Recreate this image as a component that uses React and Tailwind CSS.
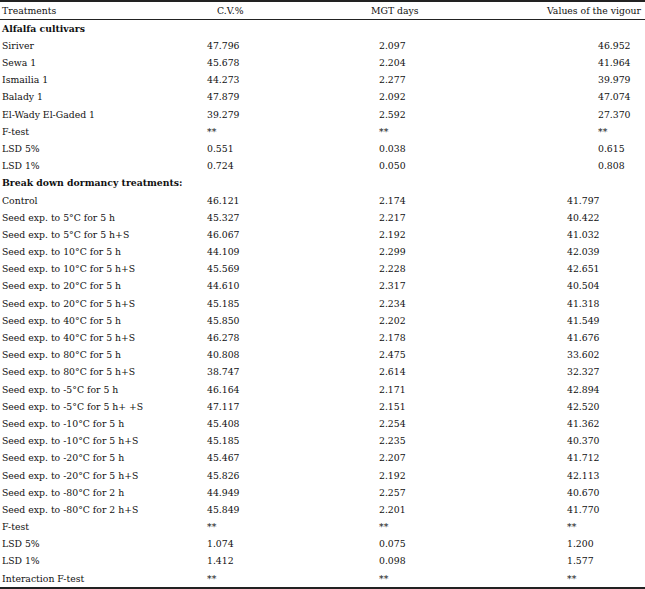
import React from 'react';

const cultivars = [
  ['Siriver', '47.796', '2.097', '46.952'],
  ['Sewa 1', '45.678', '2.204', '41.964'],
  ['Ismailia 1', '44.273', '2.277', '39.979'],
  ['Balady 1', '47.879', '2.092', '47.074'],
  ['El-Wady El-Gaded 1', '39.279', '2.592', '27.370'],
  ['F-test', '**', '**', '**'],
  ['LSD 5%', '0.551', '0.038', '0.615'],
  ['LSD 1%', '0.724', '0.050', '0.808'],
];

const dormancy = [
  ['Control', '46.121', '2.174', '41.797'],
  ['Seed exp. to 5°C for 5 h', '45.327', '2.217', '40.422'],
  ['Seed exp. to 5°C for 5 h+S', '46.067', '2.192', '41.032'],
  ['Seed exp. to 10°C for 5 h', '44.109', '2.299', '42.039'],
  ['Seed exp. to 10°C for 5 h+S', '45.569', '2.228', '42.651'],
  ['Seed exp. to 20°C for 5 h', '44.610', '2.317', '40.504'],
  ['Seed exp. to 20°C for 5 h+S', '45.185', '2.234', '41.318'],
  ['Seed exp. to 40°C for 5 h', '45.850', '2.202', '41.549'],
  ['Seed exp. to 40°C for 5 h+S', '46.278', '2.178', '41.676'],
  ['Seed exp. to 80°C for 5 h', '40.808', '2.475', '33.602'],
  ['Seed exp. to 80°C for 5 h+S', '38.747', '2.614', '32.327'],
  ['Seed exp. to -5°C for 5 h', '46.164', '2.171', '42.894'],
  ['Seed exp. to -5°C for 5 h+ +S', '47.117', '2.151', '42.520'],
  ['Seed exp. to -10°C for 5 h', '45.408', '2.254', '41.362'],
  ['Seed exp. to -10°C for 5 h+S', '45.185', '2.235', '40.370'],
  ['Seed exp. to -20°C for 5 h', '45.467', '2.207', '41.712'],
  ['Seed exp. to -20°C for 5 h+S', '45.826', '2.192', '42.113'],
  ['Seed exp. to -80°C for 2 h', '44.949', '2.257', '40.670'],
  ['Seed exp. to -80°C for 2 h+S', '45.849', '2.201', '41.770'],
  ['F-test', '**', '**', '**'],
  ['LSD 5%', '1.074', '0.075', '1.200'],
  ['LSD 1%', '1.412', '0.098', '1.577'],
  ['Interaction F-test', '**', '**', '**'],
];

function Row({ cells, vigour }) {
  return (
    <div className="flex h-[17.2px] items-center whitespace-nowrap">
      <div className="w-[205px] shrink-0">{cells[0]}</div>
      <div className="w-[172px] shrink-0">{cells[1]}</div>
      <div className={`shrink-0 ${vigour}`}>{cells[2]}</div>
      <div className="shrink-0">{cells[3]}</div>
    </div>
  );
}

function Section({ title }) {
  return (
    <div className="flex h-[17.2px] items-center font-bold whitespace-nowrap">{title}</div>
  );
}

export default function App() {
  return (
    <div
      className="w-[645px] h-[589px] bg-white text-[#111] text-[9.3px]"
      style={{ fontFamily: '"DejaVu Serif", serif' }}
    >
      <div className="border-t-2 border-b-2 border-[#222]">
        <div className="flex h-[17px] items-center whitespace-nowrap pl-[2px]">
          <div className="w-[215px] shrink-0">Treatments</div>
          <div className="w-[154px] shrink-0">C.V.%</div>
          <div className="w-[176px] shrink-0">MGT days</div>
          <div className="shrink-0">Values of the vigour</div>
        </div>
        <div className="border-t border-[#222] pl-[2px]">
          <Section title="Alfalfa cultivars" />
          {cultivars.map((r, i) => (
            <Row key={i} cells={r} vigour="w-[219px]" />
          ))}
          <Section title="Break down dormancy treatments:" />
          {dormancy.map((r, i) => (
            <Row key={i} cells={r} vigour="w-[188px]" />
          ))}
        </div>
      </div>
    </div>
  );
}
